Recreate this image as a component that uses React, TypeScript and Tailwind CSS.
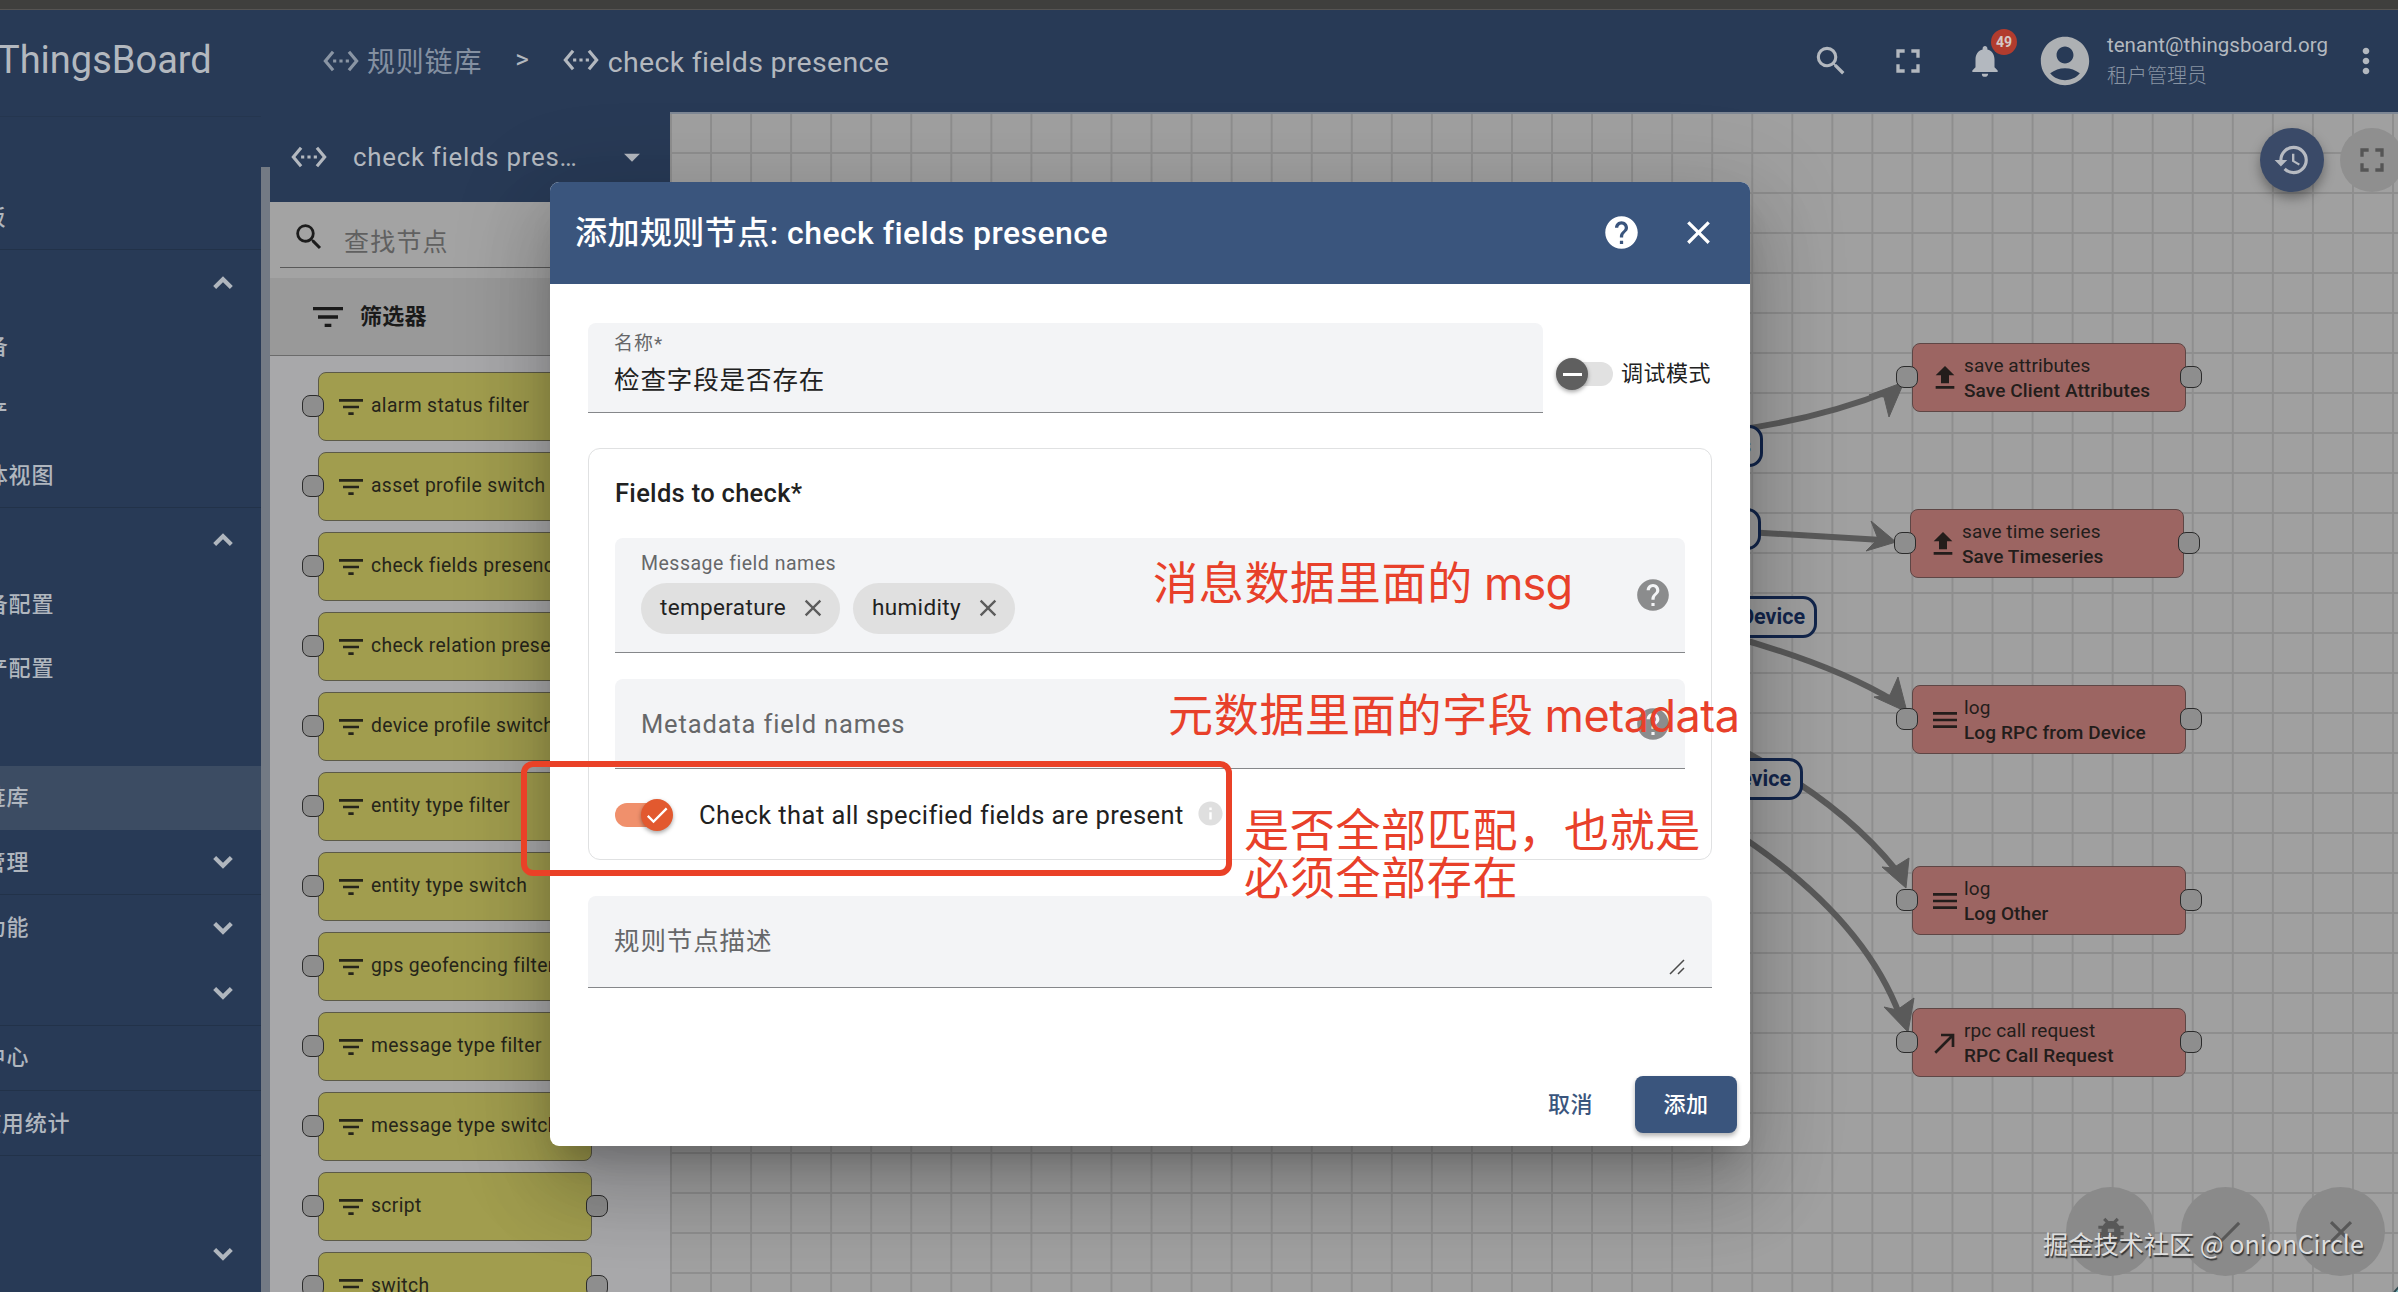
import React from 'react';
import {
  MdAccountCircle,
  MdArrowDropDown,
  MdBugReport,
  MdCallMade,
  MdClose,
  MdDone,
  MdFilterList,
  MdFullscreen,
  MdHelp,
  MdHistory,
  MdInfo,
  MdMenu,
  MdMoreVert,
  MdNotifications,
  MdSearch,
  MdSettingsEthernet,
} from 'react-icons/md';

interface MenuItem {
  label?: string;
  nested?: boolean;
  toggle?: 'up' | 'down';
  active?: boolean;
  divider?: boolean;
}

const menuItems: MenuItem[] = [
  { label: '仪表板', divider: true },
  { toggle: 'up' },
  { label: '设备', nested: true },
  { label: '资产', nested: true },
  { label: '实体视图', nested: true, divider: true },
  { toggle: 'up' },
  { label: '设备配置', nested: true },
  { label: '资产配置', nested: true },
  {},
  { label: '规则链库', active: true },
  { label: '边缘管理', toggle: 'down', divider: true },
  { label: '高级功能', toggle: 'down' },
  { toggle: 'down', divider: true },
  { label: '通知中心', divider: true },
  { label: 'Api 使用统计', divider: true },
  {},
  { toggle: 'down' },
];

const filterNodes = [
  'alarm status filter',
  'asset profile switch',
  'check fields presence',
  'check relation presence',
  'device profile switch',
  'entity type filter',
  'entity type switch',
  'gps geofencing filter',
  'message type filter',
  'message type switch',
  'script',
  'switch',
];

const UploadIcon = () => (
  <svg viewBox="0 0 24 24" className="h-8 w-8" fill="currentColor">
    <path d="M5 20h14v-2H5v2zM5 10h4v6h6v-6h4l-7-7-7 7z" />
  </svg>
);

const ToggleIcon: React.FC<{ direction: 'up' | 'down' }> = ({ direction }) => (
  <svg viewBox="0 0 24 24" className={`h-10 w-10 ${direction === 'up' ? 'rotate-180' : ''}`} fill="none">
    <path d="M7 9.3l5 5 5-5" stroke="currentColor" strokeWidth="2.5" />
  </svg>
);

interface RuleNode {
  type: string;
  name: string;
  icon: React.ReactNode;
  x: number;
  y: number;
}

// Coordinates are relative to the canvas
const ruleNodes: RuleNode[] = [
  { type: 'save attributes', name: 'Save Client Attributes', icon: <UploadIcon />, x: 1242, y: 231 },
  { type: 'save time series', name: 'Save Timeseries', icon: <UploadIcon />, x: 1240, y: 397 },
  { type: 'log', name: 'Log RPC from Device', icon: <MdMenu size={32} />, x: 1242, y: 573 },
  { type: 'log', name: 'Log Other', icon: <MdMenu size={32} />, x: 1242, y: 754 },
  { type: 'rpc call request', name: 'RPC Call Request', icon: <MdCallMade size={32} />, x: 1242, y: 896 },
];

const edgeLabels = [
  { text: 'Post attributes', right: 635, y: 313 },
  { text: 'Post telemetry', right: 637, y: 396 },
  { text: 'RPC Request from Device', right: 581, y: 484 },
  { text: 'RPC Request to Device', right: 595, y: 646 },
];

const edges = [
  { line: 'M1060 319 Q1150 307 1222 278', head: 'M1199 283 L1234 270 L1219 305 L1214 285 Z' },
  { line: 'M1060 419 L1212 428', head: 'M1201 409 L1226 430 L1196 439 L1208 427 Z' },
  { line: 'M1060 524 Q1165 553 1224 589', head: 'M1228 565 L1237 600 L1204 585 L1220 583 Z' },
  { line: 'M1060 632 Q1168 686 1226 758', head: 'M1239 746 L1236 776 L1212 755 L1223 756 Z' },
  { line: 'M1060 717 Q1192 802 1230 904', head: 'M1244 886 L1238 920 L1214 895 L1227 898 Z' },
];

const Port: React.FC<{ className?: string }> = ({ className = '' }) => (
  <span className={`absolute top-[22px] h-[22px] w-[22px] rounded-[8px] border-[1.5px] border-[#2b2b2b] bg-[#8e8e8e] ${className}`} />
);

const Sidebar = () => (
  <aside className="flex w-[270px] shrink-0 justify-end overflow-hidden bg-[#283a56] text-[#b0b6be]">
    <div className="w-[370px] shrink-0">
      <div className="flex h-[106px] items-center pb-[5px] pl-[97px] text-[38px] text-[#b3b8bf]">ThingsBoard</div>
      <div className="flex">
        <nav className="w-[361px] border-t border-[#25364f] pt-[69px]">
          {menuItems.map((item, i) => (
            <div
              key={i}
              className={`flex items-center justify-between pr-[18px] ${i < 10 ? 'h-[64.4px]' : 'h-[65.3px]'} ${
                item.nested ? 'pl-[63px]' : 'pl-[38px]'
              } ${item.active ? 'bg-[#3c4c63]' : ''} ${item.divider ? 'border-b border-[#223249]' : ''}`}
            >
              <span className="text-[22px] font-medium tracking-[0.8px]">{item.label}</span>
              {item.toggle && <ToggleIcon direction={item.toggle} />}
            </div>
          ))}
        </nav>
        <div className="mt-[51px] h-[1130px] w-[9px] bg-[#737a84]" />
      </div>
    </div>
  </aside>
);

const Toolbar = () => (
  <header className="flex h-[102px] shrink-0 items-center bg-[#283a56] pl-[52px] text-[#b3b8bf]">
    <MdSettingsEthernet size={38} className="text-[#8a95a4]" />
    <span className="mt-[3px] ml-[7px] text-[28px] tracking-[0.8px] text-[#8490a1]">规则链库</span>
    <span className="mb-[4px] ml-[33px] text-[26px]">&gt;</span>
    <MdSettingsEthernet size={38} className="mb-[2px] ml-[33px]" />
    <span className="mt-[4px] ml-[8px] text-[28.5px] tracking-[0.3px]">check fields presence</span>
    <div className="ml-auto flex items-center">
      <MdSearch size={38} />
      <MdFullscreen size={40} className="ml-[38px]" />
      <div className="relative ml-[38px]">
        <MdNotifications size={38} />
        <span className="absolute -top-[13px] left-[25px] flex h-[26px] w-[26px] items-center justify-center rounded-full bg-[#b23c2e] text-[14px] font-bold text-[#d5c8c6]">
          49
        </span>
      </div>
      <MdAccountCircle size={58} className="ml-[32px] text-[#adb0b3]" />
      <div className="ml-[13px] flex w-[239px] flex-col pb-[1px]">
        <span className="text-[20.5px] leading-[31px]">tenant@thingsboard.org</span>
        <span className="text-[20px] leading-[30px] font-light text-[#8793a3]">租户管理员</span>
      </div>
      <MdMoreVert size={40} className="mr-[12px]" />
    </div>
  </header>
);

const NodeLibrary = () => (
  <section className="flex w-[400px] shrink-0 flex-col overflow-hidden bg-[#a8a8aa]">
    <div className="flex h-[90px] shrink-0 items-center bg-[#283a56] pl-[20px] text-[#b3b8bf]">
      <MdSettingsEthernet size={38} />
      <span className="ml-[25px] w-[240px] text-[25.8px] tracking-[0.75px]">check fields pres…</span>
      <MdArrowDropDown size={38} className="ml-[20px]" />
    </div>
    <div className="h-[76px] shrink-0 bg-[#a3a3a3] pl-[10px]">
      <div className="flex h-[66px] items-center border-b-[1.5px] border-[#595959] pl-[12px]">
        <MdSearch size={34} className="mt-[4px] text-[#1c1c1c]" />
        <span className="mt-[16px] ml-[18px] text-[25px] tracking-[1.2px] text-[#606060]">查找节点</span>
      </div>
    </div>
    <div className="flex h-[78px] shrink-0 items-center border-b-[1.5px] border-[#6b6b6b] bg-[#999999] pl-[38px] text-[#1a1a1a]">
      <MdFilterList size={40} />
      <span className="ml-[12px] text-[22px] font-bold tracking-[0.3px]">筛选器</span>
    </div>
    <div className="flex flex-col gap-[11px] pt-[16px] pl-[48px]">
      {filterNodes.map((name) => (
        <div
          key={name}
          className="relative flex h-[69px] w-[274px] shrink-0 items-center rounded-[8px] border-[1.5px] border-[#5c5a48] bg-[#a19d4e] pl-[16px] text-[#26251a]"
        >
          <Port className="-left-[17px]" />
          <MdFilterList size={32} className="shrink-0" />
          <span className="ml-[4px] text-[19.3px] tracking-[0.37px] whitespace-nowrap">{name}</span>
          <Port className="-right-[17px]" />
        </div>
      ))}
    </div>
  </section>
);

const Canvas = () => (
  <section className="relative flex-1 overflow-hidden border-t-2 border-[#7e8794] bg-[#a0a0a0] bg-[linear-gradient(to_right,#8e8e8e_2px,transparent_2px),linear-gradient(to_bottom,#8e8e8e_2px,transparent_2px)] bg-[size:40.05px_40px] bg-[position:0px_-2px]">
    <svg className="absolute -top-[2px] left-0 h-[1180px] w-[1728px]" viewBox="0 0 1728 1180">
      {edges.map((edge) => (
        <g key={edge.line}>
          <path d={edge.line} fill="none" stroke="#5a5a5a" strokeWidth="6" />
          <path d={edge.head} fill="#5a5a5a" stroke="#5a5a5a" strokeWidth="1" />
        </g>
      ))}
      <circle cx="1752" cy="1200" r="34" fill="#7fb6bf" stroke="#2f4a50" strokeWidth="2" />
    </svg>

    {edgeLabels.map((label) => (
      <span
        key={label.text}
        className="absolute -mt-[2px] flex h-[42px] items-center rounded-[14px] border-[3px] border-[#13264c] bg-[#a0a0a0] px-[9px] text-[21.5px] font-bold whitespace-nowrap text-[#13264c]"
        style={{ right: label.right, top: label.y }}
      >
        {label.text}
      </span>
    ))}

    {ruleNodes.map((node) => (
      <div
        key={node.name}
        className="absolute -mt-[2px] flex h-[69px] w-[274px] items-center rounded-[8px] border-[1.5px] border-[#5e4645] bg-[#9c6562] pl-[16px] text-[#231d1b]"
        style={{ left: node.x, top: node.y }}
      >
        <Port className="-left-[17px]" />
        {node.icon}
        <div className="ml-[3px] flex flex-col text-[19px] leading-[25px] whitespace-nowrap">
          <span className="tracking-[0.1px]">{node.type}</span>
          <span className="font-medium tracking-[0.1px]">{node.name}</span>
        </div>
        <Port className="-right-[17px]" />
      </div>
    ))}

    <div className="absolute top-[14px] -right-[6px] flex gap-[16px]">
      <button className="flex h-16 w-16 items-center justify-center rounded-full bg-[#3a4a68] text-[#b7bbc2] shadow-[0_6px_12px_rgba(0,0,0,0.35)]">
        <MdHistory size={38} />
      </button>
      <button className="flex h-16 w-16 items-center justify-center rounded-full bg-[#8f8f8f] text-[#555555]">
        <MdFullscreen size={40} />
      </button>
    </div>

    <div className="absolute right-[13px] bottom-[16px] flex gap-[26px] text-[#585858]">
      <button className="flex h-[89px] w-[89px] items-center justify-center rounded-full bg-[#8a8a8a]">
        <MdBugReport size={38} />
      </button>
      <button className="flex h-[89px] w-[89px] items-center justify-center rounded-full bg-[#8a8a8a]">
        <MdDone size={38} />
      </button>
      <button className="flex h-[89px] w-[89px] items-center justify-center rounded-full bg-[#8a8a8a]">
        <MdClose size={38} />
      </button>
    </div>
  </section>
);

const Chip: React.FC<{ label: string }> = ({ label }) => (
  <span className="flex h-[51px] items-center rounded-full bg-[#e0e0e0] pr-[13px] pl-[19px] text-[#222222]">
    <span className="text-[22.5px] tracking-[0.35px]">{label}</span>
    <MdClose size={28} className="ml-[13px] text-[#5c5c5c]" />
  </span>
);

const AddRuleNodeDialog = () => (
  <div className="absolute top-[182px] left-[550px] flex h-[964px] w-[1200px] flex-col overflow-hidden rounded-[9px] bg-white text-[#212121]">
    <div className="flex h-[102px] shrink-0 items-center bg-[#3a557d] pr-[32px] pl-[25px] text-white">
      <h2 className="text-[32px] font-medium tracking-[0.45px]">添加规则节点: check fields presence</h2>
      <MdHelp size={39} className="mb-[1px] ml-auto" />
      <MdClose size={39} className="mb-[1px] ml-[38px]" />
    </div>

    <div className="flex flex-col px-[38px] pt-[39px]">
      <div className="flex items-center">
        <div className="flex h-[90px] w-[955px] flex-col rounded-t-[8px] border-b-[1.5px] border-[#85878a] bg-[#f3f4f6] pt-[6px] pl-[26px]">
          <span className="text-[19px] leading-[30px] tracking-[1px] text-[#666769]">名称*</span>
          <span className="text-[25.5px] leading-[43px] tracking-[0.9px]">检查字段是否存在</span>
        </div>
        <div className="relative mt-[12px] ml-[19px] h-[24px] w-[51px] rounded-full bg-[#e1e1e1]">
          <span className="absolute -top-[4px] -left-[6px] flex h-8 w-8 items-center justify-center rounded-full bg-[#5f5f5f] shadow-[0_2px_4px_rgba(0,0,0,0.35)]">
            <span className="h-[3px] w-[19px] bg-white" />
          </span>
        </div>
        <span className="mt-[11px] ml-[8px] text-[22px] tracking-[0.5px] whitespace-nowrap">调试模式</span>
      </div>

      <div className="mt-[35px] h-[412px] rounded-[12px] border-[1.5px] border-[#e0e1e2] px-[26px] pt-[24px]">
        <h3 className="text-[25.5px] leading-[40px] font-medium tracking-[0.3px]">Fields to check*</h3>

        <div className="mt-[25px] flex h-[115px] items-center justify-between rounded-t-[8px] border-b-[1.5px] border-[#85878a] bg-[#f3f4f6] pr-[13px] pl-[26px]">
          <div>
            <div className="text-[19.5px] leading-[28px] tracking-[0.5px] text-[#666769]">Message field names</div>
            <div className="mt-[5px] mb-[7px] flex gap-[13px]">
              <Chip label="temperature" />
              <Chip label="humidity" />
            </div>
          </div>
          <MdHelp size={38} className="text-[#8b8c8d]" />
        </div>

        <div className="mt-[26px] flex h-[90px] items-center justify-between rounded-t-[8px] border-b-[1.5px] border-[#85878a] bg-[#f3f4f6] pr-[13px] pl-[26px]">
          <span className="mt-[2px] text-[25.5px] tracking-[0.85px] text-[#666769]">Metadata field names</span>
          <MdHelp size={38} className="text-[#8b8c8d]" />
        </div>

        <div className="mt-[28px] flex h-[36px] items-center">
          <div className="relative h-[24px] w-[52px] rounded-full bg-[#f0906c]">
            <span className="absolute -top-[4px] left-[26px] flex h-8 w-8 items-center justify-center rounded-full bg-[#e2592f] text-white shadow-[0_2px_4px_rgba(0,0,0,0.35)]">
              <MdDone size={28} />
            </span>
          </div>
          <span className="ml-[32px] text-[25.5px] tracking-[0.43px]">Check that all specified fields are present</span>
          <MdInfo size={29} className="mb-[3px] ml-[12px] text-[#dfdfdf]" />
        </div>
      </div>

      <div className="mt-[36px] flex h-[92px] items-center justify-between rounded-t-[8px] border-b-[1.5px] border-[#85878a] bg-[#f3f4f6] pr-[27px] pl-[26px]">
        <span className="text-[25.5px] tracking-[0.9px] text-[#666769]">规则节点描述</span>
        <svg width="16" height="16" viewBox="0 0 16 16" className="mt-[50px]" stroke="#4a4a4a" strokeWidth="1.5">
          <path d="M1 15 L15 1 M9 15 L15 9" />
        </svg>
      </div>
    </div>

    <div className="mt-auto mb-[13px] flex items-center justify-end pr-[13px]">
      <button className="px-[42px] text-[22px] font-medium tracking-[0.5px] text-[#3a557d]">取消</button>
      <button className="h-[57px] w-[102px] rounded-[8px] bg-[#3a557d] text-[22px] font-medium tracking-[0.5px] text-white shadow-[0_3px_5px_rgba(0,0,0,0.3)]">
        添加
      </button>
    </div>
  </div>
);

// Hand-placed red notes that lie over the dialog
const Annotations = () => (
  <div className="font-['Inter','Noto_Sans_CJK_SC',sans-serif] text-[45px] leading-[48px] tracking-[0.7px] whitespace-nowrap text-[#e8402a]">
    <div className="absolute top-[761px] left-[521px] h-[115px] w-[711px] rounded-[12px] border-[6px] border-[#ea4127]" />
    <p className="absolute top-[560px] left-[1153px]">
      消息数据里面的<span className="ml-[11px] tracking-[-0.8px]">msg</span>
    </p>
    <p className="absolute top-[692px] left-[1168px]">
      元数据里面的字段<span className="ml-[11px] tracking-[-0.5px]">metadata</span>
    </p>
    <p className="absolute top-[807px] left-[1244px]">
      是否全部匹配，也就是
      <br />
      必须全部存在
    </p>
  </div>
);

export default function App() {
  return (
    <div className="relative flex h-[1292px] w-[2398px] flex-col overflow-hidden bg-[#283a56] font-['Roboto','Noto_Sans_CJK_SC',sans-serif]">
      <div className="h-[10px] shrink-0 border-b border-[#565452] bg-[#3f3f3d]" />
      <div className="flex h-[1282px]">
        <Sidebar />
        <main className="flex min-w-0 flex-1 flex-col">
          <Toolbar />
          <div className="flex min-h-0 flex-1">
            <NodeLibrary />
            <Canvas />
          </div>
        </main>
      </div>

      <div className="absolute top-[182px] left-[550px] h-[964px] w-[1200px] rounded-[9px] shadow-[0_22px_30px_-14px_rgba(0,0,0,0.2),0_48px_76px_6px_rgba(0,0,0,0.14),0_18px_92px_16px_rgba(0,0,0,0.12)]" />
      <AddRuleNodeDialog />
      <Annotations />
      <span className="absolute top-[1225px] left-[2043px] font-['Noto_Sans_CJK_SC',sans-serif] text-[25.2px] leading-[36px] whitespace-nowrap text-[#dedede] [text-shadow:1px_2px_1px_#333]">
        掘金技术社区 @ onionCircle
      </span>
    </div>
  );
}
